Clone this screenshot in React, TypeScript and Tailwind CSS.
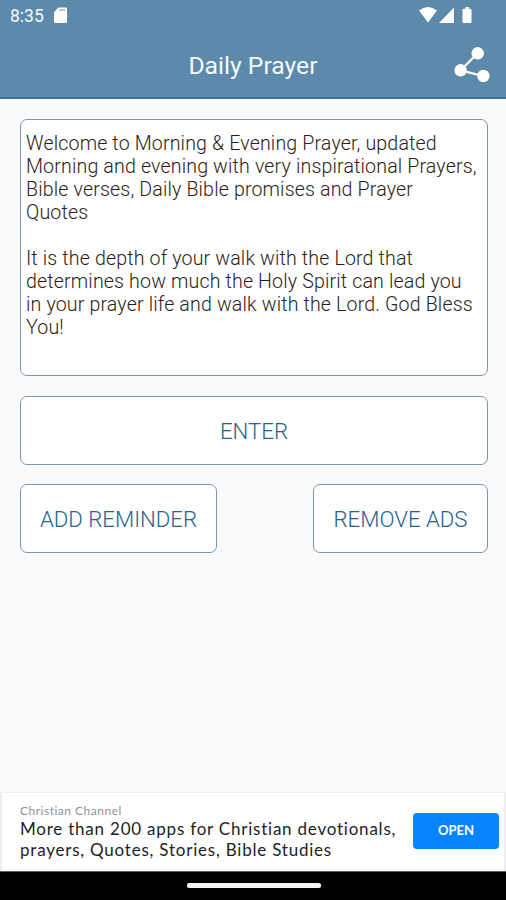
import React from "react";

const welcomeLines = [
  "Welcome to Morning & Evening Prayer, updated",
  "Morning and evening with very inspirational Prayers,",
  "Bible verses, Daily Bible promises and Prayer",
  "Quotes",
  "",
  "It is the depth of your walk with the Lord that",
  "determines how much the Holy Spirit can lead you",
  "in your prayer life and walk with the Lord. God Bless",
  "You!",
];

function StatusBar() {
  return (
    <div className="flex h-[33px] items-start justify-between pl-[10px] pr-[32px] pt-[7px]">
      <div className="flex items-start">
        <span className="w-[43px] whitespace-nowrap text-[17.500px] leading-[19px] text-[#f2f8fc]">8:35</span>
        <svg width="15" height="17" viewBox="0 0 15 17" aria-hidden="true">
          <path d="M5.500 .5h7.300Q14 .5 14 1.700v13.100q0 1.200-1.200 1.200H2.200Q1 16 1 14.800V5.200z" fill="#fff" />
          <path d="M6 3h6" stroke="#8d9aa5" strokeWidth="1.300" strokeDasharray="1.500 .7" />
        </svg>
      </div>
      <svg width="55" height="17" viewBox="0 0 55 17" fill="#fff" aria-hidden="true">
        <path d="M0 3.500Q9-3.500 18 3.500L9 15.500z" />
        <path d="M35 .5v15.500H20z" />
        <path d="M46.500 0h3.500v1.700h1.300q1.200 0 1.200 1.200v12q0 1.100-1.200 1.100h-6.600q-1.200 0-1.200-1.100v-12q0-1.200 1.200-1.200h1.800z" />
      </svg>
    </div>
  );
}

function Header() {
  return (
    <header className="h-[99px] border-b-2 border-[#3c7599] bg-[#5d8aaa]">
      <StatusBar />
      <div className="grid h-16 grid-cols-[1fr_auto_1fr] items-center">
        <span />
        <h1 className="whitespace-nowrap pt-[2px] text-[24.700px] leading-7 text-[#f4f9fc]">Daily Prayer</h1>
        <button aria-label="Share" className="justify-self-end pr-[16px]">
          <svg width="36" height="36" viewBox="0 0 36 36" aria-hidden="true">
            <path d="M23.700 6.300L6.600 23.300 29.400 29" fill="none" stroke="#fff" strokeWidth="2.300" />
            <g fill="#fff">
              <circle cx="23.700" cy="6.300" r="6.200" />
              <circle cx="6.600" cy="23.300" r="6.200" />
              <circle cx="29.400" cy="29" r="6.200" />
            </g>
          </svg>
        </button>
      </div>
    </header>
  );
}

function OutlineButton({ children, className }: { children: React.ReactNode; className: string }) {
  return (
    <button
      className={`flex h-[69px] items-center justify-center whitespace-nowrap rounded-[7px] border-[1.500px] border-[#7598b3] bg-white pt-[2px] text-[22.200px] font-light text-[#24638a] ${className}`}
    >
      {children}
    </button>
  );
}

export default function App() {
  return (
    <div className="flex h-[900px] w-[506px] flex-col overflow-hidden bg-[#fafafa] font-['Roboto',sans-serif]">
      <Header />
      <main className="flex flex-1 flex-col pl-[20px] pr-[18px] pt-[20px]">
        <section className="mb-5 h-[257px] rounded-[7px] border border-[#7598b3] bg-white pl-[5px] pt-[13px] text-[19.600px] font-light leading-[22.950px] tracking-[0.150px] text-[#2b1d18]">
          {welcomeLines.map((line, i) => (
            <p key={i} className="h-[22.950px] whitespace-nowrap">{line}</p>
          ))}
        </section>
        <OutlineButton className="mb-[19px] w-full">ENTER</OutlineButton>
        <div className="flex justify-between">
          <OutlineButton className="w-[197px]">ADD REMINDER</OutlineButton>
          <OutlineButton className="w-[175px]">REMOVE ADS</OutlineButton>
        </div>
      </main>
      <aside className="flex h-[79px] items-start justify-between border-x-2 border-t border-[#eeeeee] bg-white pl-[18px] pr-[5px] font-['Lato',sans-serif]">
        <div className="whitespace-nowrap pt-[11px]">
          <p className="text-[12px] leading-[14px] tracking-[0.500px] text-[#929292]">Christian Channel</p>
          <p className="pt-px text-[17px] leading-[20.500px] tracking-[0.780px] text-[#1e1e1e]">
            More than 200 apps for Christian devotionals,
            <br />
            prayers, Quotes, Stories, Bible Studies
          </p>
        </div>
        <button className="mt-[20px] h-[36px] w-[86px] rounded-[4px] bg-[#0783ff] text-[13px] font-bold text-white">
          OPEN
        </button>
      </aside>
      <nav className="flex h-[29px] items-start justify-center border-t border-[#606060] bg-black pt-[11px]">
        <div className="ml-px h-[5px] w-[134px] rounded-[2px] bg-[#f5f5f5]" />
      </nav>
    </div>
  );
}
